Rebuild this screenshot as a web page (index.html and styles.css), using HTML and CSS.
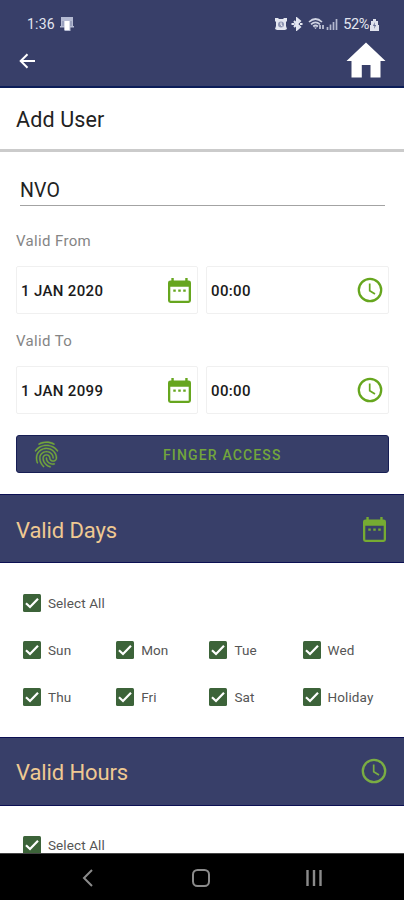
FILE: index.html
```html
<!DOCTYPE html>
<html lang="en">
<head>
<meta charset="utf-8">
<title>Add User</title>
<link rel="stylesheet" href="styles.css">
</head>
<body>
<svg class="defs" width="0" height="0" aria-hidden="true">
  <symbol id="calendar" viewBox="0 0 24 26">
    <path fill-rule="evenodd" d="M3.5 0H6v2.5h12V0h2.5v2.5H21.5Q24 2.5 24 5V23.5Q24 26 21.500 26H2.500Q0 26 0 23.500V5Q0 2.500 2.500 2.500H3.500ZM2.400 9V23.600H21.600V9Z"/>
    <path d="M5.500 12h2.600v2.200H5.500zm5.200 0h2.600v2.200h-2.600zm5.200 0h2.600v2.200h-2.600z"/>
  </symbol>
  <symbol id="clock" viewBox="0 0 26 26">
    <circle cx="13" cy="13" r="11.200" fill="none" stroke="currentColor" stroke-width="2.300"/>
    <path d="M12.700 6.500V13.700L18 17" fill="none" stroke="currentColor" stroke-width="1.700"/>
  </symbol>
  <symbol id="check" viewBox="0 0 18 18">
    <rect width="18" height="18" rx="1.500" fill="#3c6339"/>
    <path d="M3 9.300L7 13L15 4.800" fill="none" stroke="#fff" stroke-width="2.200"/>
  </symbol>
</svg>

<div class="phone">
  <header class="top">
    <div class="status">
      <div class="status-left">
        <span class="time">1:36</span>
        <svg width="14" height="14" viewBox="0 0 14 14"><path d="M1 0h12v9h1v1.500h-3.500V14h-6v-3.500H0V9h1z" fill="#b4bad2"/><path d="M4.500 4h5v9h-5z" fill="#fff"/><path d="M3 4v5M11 4v5" stroke="#7e86a8"/></svg>
      </div>
      <div class="status-right">
        <svg width="14" height="14" viewBox="0 0 14 14"><path d="M1 1h3l1 1h4l1-1h3v3l-1 1v4l1 3-2 1H3l-2-1 1-3V5L1 4z" fill="#e3e6f0"/><circle cx="7" cy="7.500" r="3" fill="#8d94b2"/><path d="M7 5.500v2.500l1.500 1" fill="none" stroke="#fff"/></svg>
        <svg class="bt" width="12" height="14" viewBox="0 0 12 14"><path d="M3 4l6 6-3 2.500v-11L9 4l-6 6" fill="#aab0ca" stroke="#e3e6f0" stroke-width="2"/><path d="M.5 7h2.500M9 7h2.500" stroke="#e3e6f0" stroke-width="2"/></svg>
        <svg class="wifi" width="17" height="14" viewBox="0 0 17 14"><path d="M1 5Q7.500-1 14 5M3 7.300Q7.500 3.300 12 7.300M5.200 9.500Q7.500 7.500 10 9.500" fill="none" stroke="#cfd3e2" stroke-width="1.700"/><path d="M6 10.500h3L7.500 12z" fill="#d8dbe8"/><path d="M12 8v4M15 8v4" stroke="#d8dbe8" stroke-width="1.500"/></svg>
        <svg class="signal" width="12" height="14" viewBox="0 0 12 14"><path d="M1.500 13v-3M4.500 13V7.500M7.500 13V5M10.500 13V2" stroke="#b4b9cf" stroke-width="1.700"/></svg>
        <span class="percent">52%</span>
        <svg width="9" height="13" viewBox="0 0 9 13"><path d="M3 1h3v2h2v4h1v6H0V7h1V3h2z" fill="#dfe2ec"/><path d="M4.800 4L3 8h1.500l-.5 3 2.200-4H4.700z" fill="#626a91"/></svg>
      </div>
    </div>
    <div class="toolbar">
      <svg class="back" width="17" height="16" viewBox="0 0 17 16"><path d="M16 8H2M8.500 1.200L1.700 8l6.800 6.800" fill="none" stroke="#fff" stroke-width="2"/></svg>
      <svg class="home" width="40" height="37" viewBox="0 0 40 37"><path d="M20 .5L39.500 19H34.500V35.500H24.500V23H15.800V35.500H5.500V19H.5z" fill="#fff"/></svg>
    </div>
  </header>

  <div class="title"><h1>Add User</h1></div>

  <main>
    <section class="form">
      <div class="name"><span>NVO</span></div>
      <div class="label">Valid From</div>
      <div class="fields">
        <div class="field"><span>1 JAN 2020</span><svg class="cal"><use href="#calendar"/></svg></div>
        <div class="field"><span class="hour">00:00</span><svg class="clk"><use href="#clock"/></svg></div>
      </div>
      <div class="label to">Valid To</div>
      <div class="fields">
        <div class="field"><span>1 JAN 2099</span><svg class="cal"><use href="#calendar"/></svg></div>
        <div class="field"><span class="hour">00:00</span><svg class="clk"><use href="#clock"/></svg></div>
      </div>
      <div class="finger">
        <svg width="31" height="31" viewBox="0 0 24 24"><path d="M17.81 4.47c-.08 0-.16-.02-.23-.06C15.66 3.42 14 3 12.01 3c-1.980 0-3.860.47-5.570 1.410-.24.13-.54.04-.68-.2-.13-.24-.04-.55.2-.68C7.820 2.520 9.860 2 12.010 2c2.130 0 3.990.47 6.030 1.520.25.13.34.43.21.67-.09.18-.26.28-.44.28zM3.500 9.720c-.1 0-.2-.03-.29-.09-.23-.16-.28-.47-.12-.7.99-1.400 2.250-2.500 3.750-3.270C9.980 4.040 14 4.030 17.150 5.650c1.500.77 2.760 1.860 3.750 3.250.16.22.11.54-.12.7-.23.16-.54.11-.7-.12-.9-1.260-2.040-2.250-3.390-2.940-2.870-1.470-6.540-1.470-9.400.01-1.360.7-2.500 1.700-3.400 2.960-.08.14-.23.21-.39.21zm6.250 12.070c-.13 0-.26-.05-.35-.15-.87-.87-1.340-1.430-2.010-2.640-.69-1.230-1.050-2.730-1.050-4.340 0-2.970 2.540-5.390 5.660-5.390s5.660 2.420 5.660 5.390c0 .28-.22.5-.5.5s-.5-.22-.5-.5c0-2.420-2.090-4.390-4.660-4.390-2.570 0-4.660 1.970-4.660 4.390 0 1.440.32 2.770.93 3.850.64 1.150 1.080 1.640 1.850 2.420.19.2.19.51 0 .71-.11.1-.24.15-.37.15zm7.170-1.850c-1.190 0-2.240-.3-3.100-.89-1.490-1.010-2.380-2.650-2.380-4.390 0-.28.22-.5.5-.5s.5.22.5.5c0 1.410.72 2.740 1.940 3.560.71.48 1.540.71 2.540.71.24 0 .64-.03 1.040-.1.27-.05.53.13.58.41.05.27-.13.53-.41.58-.57.11-1.070.12-1.210.12zM14.910 22c-.04 0-.09-.01-.13-.02-1.590-.44-2.630-1.030-3.720-2.100-1.400-1.390-2.170-3.240-2.170-5.220 0-1.620 1.380-2.940 3.080-2.940 1.700 0 3.080 1.320 3.080 2.940 0 1.070.93 1.940 2.080 1.940s2.080-.87 2.080-1.940c0-3.770-3.250-6.830-7.250-6.830-2.840 0-5.440 1.580-6.610 4.030-.39.81-.59 1.760-.59 2.800 0 .78.07 2.010.67 3.610.1.26-.03.55-.29.64-.26.1-.55-.04-.64-.29-.49-1.310-.73-2.610-.73-3.960 0-1.200.23-2.290.68-3.240 1.330-2.790 4.280-4.600 7.510-4.600 4.550 0 8.250 3.510 8.250 7.830 0 1.620-1.380 2.940-3.080 2.940s-3.080-1.320-3.080-2.940c0-1.070-.93-1.940-2.080-1.940s-2.080.87-2.080 1.940c0 1.710.66 3.310 1.870 4.510.95.94 1.860 1.460 3.270 1.850.27.07.42.35.35.61-.05.23-.26.38-.47.38z"/></svg>
        <span>FINGER ACCESS</span>
      </div>
    </section>

    <div class="band"><h2>Valid Days</h2><svg class="cal"><use href="#calendar"/></svg></div>
    <section class="checks">
      <div class="check all"><svg><use href="#check"/></svg><span>Select All</span></div>
      <div class="check"><svg><use href="#check"/></svg><span>Sun</span></div>
      <div class="check"><svg><use href="#check"/></svg><span>Mon</span></div>
      <div class="check"><svg><use href="#check"/></svg><span>Tue</span></div>
      <div class="check"><svg><use href="#check"/></svg><span>Wed</span></div>
      <div class="check"><svg><use href="#check"/></svg><span>Thu</span></div>
      <div class="check"><svg><use href="#check"/></svg><span>Fri</span></div>
      <div class="check"><svg><use href="#check"/></svg><span>Sat</span></div>
      <div class="check"><svg><use href="#check"/></svg><span>Holiday</span></div>
    </section>
    <div class="band hours"><h2>Valid Hours</h2><svg class="clk"><use href="#clock"/></svg></div>
    <section class="checks last">
      <div class="check all"><svg><use href="#check"/></svg><span>Select All</span></div>
    </section>
  </main>

  <nav class="nav">
    <svg width="18" height="20" viewBox="0 0 18 20"><path d="M13 2L5 10l8 8" fill="none" stroke="#8b8b8b" stroke-width="2"/></svg>
    <svg width="18" height="20" viewBox="0 0 18 20"><rect x="1" y="2" width="16" height="16" rx="4.500" fill="none" stroke="#8b8b8b" stroke-width="2"/></svg>
    <svg width="18" height="20" viewBox="0 0 18 20"><path d="M2.500 2v16M9 2v16M15.500 2v16" stroke="#8b8b8b" stroke-width="2.400"/></svg>
  </nav>
</div>
</body>
</html>
```
FILE: styles.css
```css
* { box-sizing: border-box; }
body {
  margin: 0;
  background: #fff;
  font-family: Roboto, "Liberation Sans", sans-serif;
  color: #222;
}
svg { display: block; flex: none; }
.defs { position: absolute; }
h1, h2 { margin: 0; font-weight: 400; }
.phone {
  width: 404px;
  height: 900px;
  display: flex;
  flex-direction: column;
  overflow: hidden;
}

.top {
  flex: none;
  height: 88px;
  background: #383f69;
  border-bottom: 2px solid #0b1d58;
}
.status {
  height: 42px;
  padding: 6px 25px 0 27px;
  display: flex;
  align-items: center;
  justify-content: space-between;
  color: #e3e6f0;
  font-size: 14px;
}
.status-left, .status-right { display: flex; align-items: center; }
.status-left { gap: 5px; }
.time { letter-spacing: 0.2px; }
.bt { margin-left: 3px; }
.wifi { margin-left: 5px; }
.signal { margin-left: 1px; }
.percent { margin: 0 1px 0 5px; font-size: 14.5px; letter-spacing: -0.4px; }
.toolbar {
  height: 37px;
  padding: 0 18px 0 19px;
  display: flex;
  align-items: center;
  justify-content: space-between;
}

.title {
  flex: none;
  height: 64px;
  padding: 0 17px 0 16px;
  border-bottom: 3px solid #cbcbcb;
  display: flex;
  align-items: center;
}
.title h1 { font-size: 21.5px; letter-spacing: 0.15px; line-height: 30px; padding-top: 3px; }

main { flex: 1; min-height: 0; overflow: hidden; }
.form { height: 342px; padding: 0 15px 0 16px; }
.name {
  height: 54px;
  margin: 0 4px;
  border-bottom: 1.500px solid #a3a3a3;
  display: flex;
  align-items: flex-end;
  font-size: 19.5px;
  line-height: 29px;
  letter-spacing: 0.2px;
}
.label {
  height: 60px;
  padding-top: 25px;
  font-size: 15px;
  line-height: 20px;
  letter-spacing: 0.35px;
  color: #858585;
}
.label.to { height: 52px; padding-top: 17px; }
.fields { display: grid; grid-template-columns: 182px 183px; gap: 8px; height: 48px; }
.field {
  border: 1.500px solid #f0f0f0;
  border-radius: 2px;
  padding: 0 5px 0 4px;
  display: flex;
  align-items: center;
  justify-content: space-between;
  font-size: 15px;
  font-weight: 500;
  letter-spacing: 0.35px;
  color: #1b1b1b;
}
.field span { padding-top: 2px; }
.cal { width: 23px; height: 25px; margin-right: 1px; fill: #66a61e; }
.clk { width: 26px; height: 26px; color: #66a61e; }
.finger {
  margin-top: 21px;
  height: 38px;
  border: 1px solid #171e54;
  border-radius: 3px;
  background: #383f69;
  padding-left: 14px;
  display: flex;
  align-items: center;
  color: #72a53c;
  font-size: 14px;
  font-weight: 500;
  letter-spacing: 1.15px;
}
.finger svg { fill: #72a53c; stroke: #72a53c; stroke-width: 0.25; }
.finger span { margin-left: 101px; padding-top: 1px; }

.band {
  height: 69px;
  padding: 3px 18px 0 16px;
  background: #383f69;
  border-top: 1.500px solid #0c1053;
  border-bottom: 1.500px solid #0c1053;
  display: flex;
  align-items: center;
  justify-content: space-between;
}
.band h2 { color: #efc992; font-size: 22px; letter-spacing: -0.1px; }
.band.hours { padding-top: 1px; }
.band .cal, .band .clk { fill: #76ab32; color: #7aad43; margin: -2px 0 0; }
.band .clk { margin: -2px -1px 0 0; }
.checks {
  height: 174px;
  padding: 16px 0 0 23px;
  display: grid;
  grid-template-columns: repeat(4, 93.200px);
  grid-template-rows: repeat(3, 47.200px);
}
.checks.last { padding-top: 15px; }
.check { display: flex; align-items: center; gap: 7px; font-size: 13.5px; letter-spacing: 0.1px; color: #555; }
.check.all { grid-column: 1 / -1; }
.check svg { width: 18px; height: 18px; }

.nav {
  flex: none;
  height: 47px;
  background: #000;
  border-top: 1px solid #444;
  display: flex;
  align-items: center;
  justify-content: space-between;
  padding: 1px 81px 0 79px;
}
```
